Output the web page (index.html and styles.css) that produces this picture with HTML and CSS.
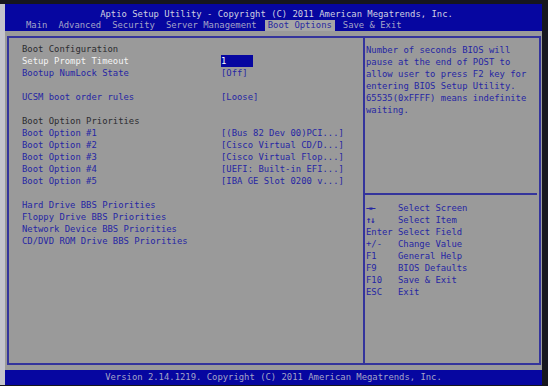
FILE: index.html
```html
<!DOCTYPE html>
<html lang="en">
  <head>
    <meta charset="UTF-8" />
    <title>Aptio Setup Utility</title>
    <link rel="stylesheet" href="styles.css">
  </head>
  <body>
    <div class="screen">
      <div class="top">
        <div class="title">Aptio Setup Utility - Copyright (C) 2011 American Megatrends, Inc.</div>
        <div class="tabs">
          <span class="tab">Main</span>
          <span class="tab">Advanced</span>
          <span class="tab">Security</span>
          <span class="tab">Server Management</span>
          <span class="tab is-active">Boot Options</span>
          <span class="tab">Save &amp; Exit</span>
        </div>
      </div>

      <div class="frame">
        <div class="left">
          <div class="row is-heading"><span>Boot Configuration</span></div>
          <div class="row is-selected"><span>Setup Prompt Timeout</span><span class="value-box">1</span></div>
          <div class="row"><span>Bootup NumLock State</span><span>[Off]</span></div>
          <div class="row"></div>
          <div class="row"><span>UCSM boot order rules</span><span>[Loose]</span></div>
          <div class="row"></div>
          <div class="row is-heading"><span>Boot Option Priorities</span></div>
          <div class="row"><span>Boot Option #1</span><span>[(Bus 82 Dev 00)PCI...]</span></div>
          <div class="row"><span>Boot Option #2</span><span>[Cisco Virtual CD/D...]</span></div>
          <div class="row"><span>Boot Option #3</span><span>[Cisco Virtual Flop...]</span></div>
          <div class="row"><span>Boot Option #4</span><span>[UEFI: Built-in EFI...]</span></div>
          <div class="row"><span>Boot Option #5</span><span>[IBA GE Slot 0200 v...]</span></div>
          <div class="row"></div>
          <div class="row"><span>Hard Drive BBS Priorities</span></div>
          <div class="row"><span>Floppy Drive BBS Priorities</span></div>
          <div class="row"><span>Network Device BBS Priorities</span></div>
          <div class="row"><span>CD/DVD ROM Drive BBS Priorities</span></div>
        </div>

        <div class="right">
          <div class="help">
            <div>Number of seconds BIOS will</div>
            <div>pause at the end of POST to</div>
            <div>allow user to press F2 key for</div>
            <div>entering BIOS Setup Utility.</div>
            <div>65535(0xFFFF) means indefinite</div>
            <div>waiting.</div>
          </div>
          <div class="keys">
            <div class="key"><span class="arrows">&rarr;&larr;</span><span>Select Screen</span></div>
            <div class="key"><span class="arrows">&uarr;&darr;</span><span>Select Item</span></div>
            <div class="key"><span>Enter</span><span>Select Field</span></div>
            <div class="key"><span>+/-</span><span>Change Value</span></div>
            <div class="key"><span>F1</span><span>General Help</span></div>
            <div class="key"><span>F9</span><span>BIOS Defaults</span></div>
            <div class="key"><span>F10</span><span>Save &amp; Exit</span></div>
            <div class="key"><span>ESC</span><span>Exit</span></div>
          </div>
        </div>
      </div>

      <div class="foot">Version 2.14.1219. Copyright (C) 2011 American Megatrends, Inc.</div>
    </div>
  </body>
</html>
```

FILE: styles.css
```css
* {
  box-sizing: border-box;
  margin: 0;
  padding: 0;
}
body {
  background: #16161e;
  font: 8.9px/12px "DejaVu Sans Mono", "Liberation Mono", monospace;
  padding-top: 4px;
  height: 386px;
  overflow: hidden;
}
.screen {
  width: 542px;
  height: 381px;
  border-left: 5px solid #c4c4cc;
  background: #9a9a9a;
  display: flex;
  flex-direction: column;
}

.top {
  background: #0606a0;
  height: 27px;
  padding-top: 5px;
}
.title {
  text-align: center;
  color: #cfcfe0;
  line-height: 11px;
  padding-left: 6px;
}
.tabs {
  display: flex;
  padding-left: 18px;
  line-height: 11px;
}
.tab {
  padding: 0 3px;
  margin-right: 5px;
  color: #a4a4c8;
  white-space: pre;
}
.tab.is-active {
  background: #a6a6a6;
  color: #2a2aa0;
}

.frame {
  margin: 5px 1px 0 2px;
  height: 329px;
  border: 2px solid #34349c;
  display: flex;
}
.left {
  width: 356px;
  border-right: 2px solid #34349c;
  padding: 5px 0 0 13px;
}
.row {
  display: grid;
  grid-template-columns: 199px auto;
  height: 12px;
  color: #2626a4;
  white-space: pre;
}
.row.is-heading {
  color: #2c2c30;
}
.row.is-selected {
  color: #f4f4f4;
}
.value-box {
  display: block;
  width: 32px;
  background: #0606a0;
  color: #ffffff;
}

.right {
  flex: 1;
  display: flex;
  flex-direction: column;
  color: #2626a4;
}
.help {
  height: 155px;
  padding: 6px 0 0 1px;
}
.help div {
  height: 12px;
  white-space: nowrap;
}
.keys {
  border-top: 2px solid #34349c;
  margin-right: 2px;
  padding: 7px 0 0 1px;
}
.key {
  display: grid;
  grid-template-columns: 32px auto;
  height: 12px;
  white-space: pre;
}
.arrows {
  font-weight: bold;
  letter-spacing: -1px;
}

.foot {
  margin-top: auto;
  height: 15px;
  background: #0606a0;
  color: #a4a4c8;
  text-align: center;
  line-height: 15px;
}
```
